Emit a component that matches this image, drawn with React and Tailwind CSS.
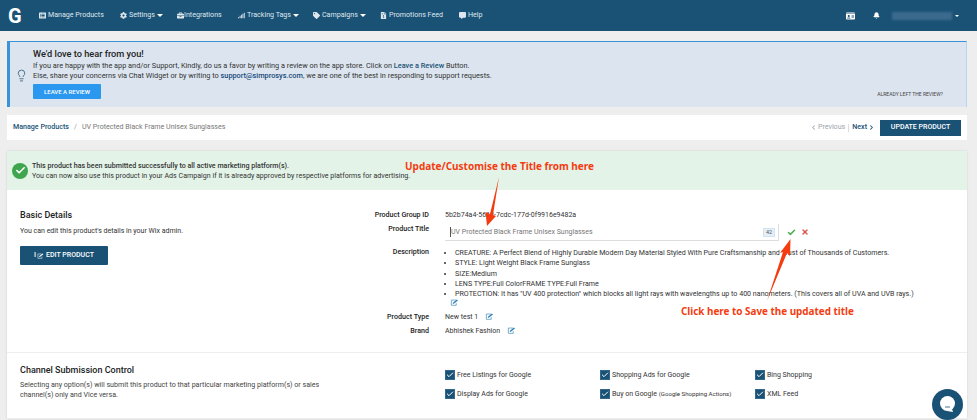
import { Bell, Check, ChevronLeft, ChevronRight, Lightbulb, X } from 'lucide-react'
import { FaBriefcase, FaCog, FaCommentAlt, FaFileInvoiceDollar, FaIdCard, FaListAlt, FaSignal, FaTag } from 'react-icons/fa'

const navItems = [
  { label: 'Manage Products', icon: FaListAlt, width: 'w-[81px]' },
  { label: 'Settings', icon: FaCog, caret: true, width: 'w-[57px]' },
  { label: 'Integrations', icon: FaBriefcase, width: 'w-[61px]', tight: true },
  { label: 'Tracking Tags', icon: FaSignal, caret: true, width: 'w-[75px]' },
  { label: 'Campaigns', icon: FaTag, caret: true, width: 'w-[67px]' },
  { label: 'Promotions Feed', icon: FaFileInvoiceDollar, width: 'w-[79px]' },
  { label: 'Help', icon: FaCommentAlt, width: 'w-[25px]' },
]

const bullets = [
  'CREATURE: A Perfect Blend of Highly Durable Modern Day Material Styled With Pure Craftsmanship and Trust of Thousands of Customers.',
  'STYLE: Light Weight Black Frame Sunglass',
  'SIZE:Medium',
  'LENS TYPE:Full ColorFRAME TYPE:Full Frame',
  'PROTECTION: It has "UV 400 protection" which blocks all light rays with wavelengths up to 400 nanometers. (This covers all of UVA and UVB rays.)',
]

function EditIcon({ className = '' }) {
  return (
    <svg viewBox="0 0 12 10" className={`h-[7px] w-[9px] text-[#2f7fb5] ${className}`} fill="none" stroke="currentColor">
      <path d="M8 1.5H1.5v7.5h7V6" strokeWidth="0.9" />
      <path d="M3.5 7l.6-2L9.5.8l1.4 1.4L5.5 6.4z" fill="currentColor" stroke="none" />
    </svg>
  )
}

function Caret() {
  return <span className="ml-[2px] h-0 w-0 border-x-[3px] border-t-[3px] border-x-transparent border-t-white" />
}

function Label({ children }) {
  return <span className="mr-[16px] w-[85px] shrink-0 text-right text-[7.1px] font-medium leading-[10px] text-[#222]">{children}</span>
}

function Channel({ children }) {
  return (
    <div className="flex w-[155px] items-center gap-[2px]">
      <span className="flex h-[10px] w-[10px] items-center justify-center border border-[#33688c] bg-[#1a5276]">
        <Check size={8} strokeWidth={3} className="text-white" />
      </span>
      <span className="text-[7px] leading-[10px] text-[#333]">{children}</span>
    </div>
  )
}

export default function App() {
  return (
    <div className="relative h-[420px] w-[977px] overflow-hidden bg-[#eeeeee] font-['Roboto',sans-serif] text-[#333]">
      {/* NAV */}
      <header className="flex h-[31px] items-center bg-[#1a5276] pl-[8px] text-white">
        <span className="w-[31px] text-[20px] font-bold leading-none">G</span>
        <nav className="flex items-center">
          {navItems.map((item) => (
            <div key={item.label} className={`flex items-center text-[7.1px] text-[#dfe7ee] ${item.width}`}>
              <item.icon className={`h-[7px] w-[7px] shrink-0 ${item.tight ? 'mr-0' : 'mr-[2px]'}`} />
              <span className="whitespace-nowrap">{item.label}</span>
              {item.caret && <Caret />}
            </div>
          ))}
        </nav>
        <div className="ml-auto flex items-center pr-[18px]">
          <FaIdCard className="h-[8px] w-[9px]" />
          <Bell size={7} fill="white" className="ml-[18px]" />
          <span className="ml-[12px] h-[8px] w-[60px] bg-[#3b6a8c] blur-[1px]" />
          <span className="ml-[3px] h-0 w-0 border-x-[2px] border-t-[2px] border-x-transparent border-t-white" />
        </div>
      </header>

      <main className="mx-[7px] w-[960px]">
        {/* REVIEW BANNER */}
        <section className="relative mt-[10px] flex h-[66px] border-l-[3px] border-r border-t border-[#3b93d9] border-r-[#b7d5ec] bg-[#dce5ef] pl-[5px]">
          <Lightbulb size={13} strokeWidth={1.4} className="mt-[27px] shrink-0 text-[#1f4d70]" />
          <div className="ml-[5px] pt-[6px]">
            <h2 className="text-[9.2px] font-medium leading-[12px] text-[#222]">We'd love to hear from you!</h2>
            <p className="mt-[1px] text-[7.33px] leading-[10px] text-[#333]">
              If you are happy with the app and/or Support, Kindly, do us a favor by writing a review on the app store. Click on{' '}
              <span className="font-medium text-[#1a5276]">Leave a Review</span> Button.
            </p>
            <p className="text-[7.33px] leading-[10px] text-[#333]">
              Else, share your concerns via Chat Widget or by writing to{' '}
              <span className="font-medium text-[#14497a]">support@simprosys.com</span>, we are one of the best in responding to support requests.
            </p>
            <button className="mt-[3px] flex h-[15px] w-[68px] items-center justify-center rounded-[1px] bg-[#2b98f0] text-[6px] font-medium text-white">
              LEAVE A REVIEW
            </button>
          </div>
          <span className="ml-auto mr-[23px] mt-[47px] text-[5px] leading-[10px] text-[#444]">ALREADY LEFT THE REVIEW?</span>
        </section>

        {/* BREADCRUMB */}
        <section className="mt-[8px] flex h-[25px] items-center bg-white px-[6px]">
          <span className="text-[7.1px] font-medium text-[#1a5276]">Manage Products</span>
          <span className="mx-[5px] text-[7.1px] text-[#999]">/</span>
          <span className="text-[7.1px] text-[#777]">UV Protected Black Frame Unisex Sunglasses</span>
          <div className="ml-auto flex items-center text-[7.1px]">
            <ChevronLeft size={7} strokeWidth={3.5} className="text-[#9ab]" />
            <span className="ml-[1px] text-[#9aa5ad]">Previous</span>
            <span className="mx-[3px] h-[8px] w-px bg-[#ddd]" />
            <span className="font-medium text-[#1a5276]">Next</span>
            <ChevronRight size={7} strokeWidth={3.5} className="ml-[1px] text-[#1a5276]" />
            <button className="ml-[5px] flex h-[16px] w-[81px] items-center justify-center bg-[#1a5276] text-[7px] font-medium text-white">
              UPDATE PRODUCT
            </button>
          </div>
        </section>

        {/* PRODUCT CARD */}
        <section className="mt-[11px] bg-white shadow-[0_0_2px_rgba(0,0,0,0.12)]">
          <div className="flex h-[39px] items-center bg-[#e4f3e8] pl-[5px]">
            <span className="flex h-[16px] w-[16px] items-center justify-center rounded-full bg-[#3fa64f]">
              <Check size={11} strokeWidth={3.5} className="text-white" />
            </span>
            <div className="ml-[4px] text-[7.1px] leading-[9.5px] text-[#333]">
              <p className="font-medium">This product has been submitted successfully to all active marketing platform(s).</p>
              <p>You can now also use this product in your Ads Campaign if it is already approved by respective platforms for advertising.</p>
            </div>
          </div>

          <div className="flex h-[163px] border-b border-[#eeeeee] pl-[13px] pt-[19px]">
            <div className="w-[324px] shrink-0">
              <h3 className="text-[9px] font-medium leading-[12px] text-[#222]">Basic Details</h3>
              <p className="mt-[5px] text-[7px] leading-[10px] text-[#333]">You can edit this product's details in your Wix admin.</p>
              <button className="mt-[10px] flex h-[19px] w-[88px] items-center justify-center rounded-[1px] bg-[#1a5276] text-[7px] font-medium text-white">
                <span className="mr-[1px]">I</span>
                <EditIcon className="mr-[2px] !h-[6px] !w-[7px] !text-white" />
                EDIT PRODUCT
              </button>
            </div>
            <div className="flex flex-col pt-[1px]">
              <div className="flex h-[14px]">
                <Label>Product Group ID</Label>
                <span className="text-[7px] leading-[10px] text-[#333]">5b2b74a4-5613-7cdc-177d-0f9916e9482a</span>
              </div>
              <div className="flex h-[23px]">
                <Label>Product Title</Label>
                <div className="flex h-[17px] w-[334px] items-center justify-between border-b border-r border-[#ddd] pl-[5px] pr-[3px]">
                  <span className="border-l border-[#555] text-[7px] text-[#777]">UV Protected Black Frame Unisex Sunglasses</span>
                  <span className="flex h-[9px] w-[12px] items-center justify-center border border-[#cfe3f3] bg-[#e4eff8] text-[5.5px] text-[#555]">42</span>
                </div>
                <Check size={9} strokeWidth={4} className="ml-[8px] mt-[4px] text-[#4cae4f]" />
                <X size={8} strokeWidth={4} className="ml-[5px] mt-[4px] text-[#d9534f]" />
              </div>
              <div className="flex">
                <Label>Description</Label>
                <div className="w-[500px]">
                  <ul className="mt-[1px] list-disc pl-[10px] text-[7.1px] leading-[10.3px] text-[#333]">
                    {bullets.map((b) => (
                      <li key={b} className="whitespace-nowrap">{b}</li>
                    ))}
                  </ul>
                  <EditIcon className="ml-[5px] block" />
                </div>
              </div>
              <div className="mt-[6px] flex h-[14px]">
                <Label>Product Type</Label>
                <span className="text-[7px] leading-[10px] text-[#333]">New test 1</span>
                <EditIcon className="ml-[7px] mt-[1px]" />
              </div>
              <div className="flex h-[14px]">
                <Label>Brand</Label>
                <span className="text-[7px] leading-[10px] text-[#333]">Abhishek Fashion</span>
                <EditIcon className="ml-[7px] mt-[1px]" />
              </div>
            </div>
          </div>

          <div className="flex h-[66px] border-b border-[#eeeeee] pl-[13px] pt-[11px]">
            <div className="w-[425px] shrink-0">
              <h3 className="text-[9px] font-medium leading-[12px] text-[#222]">Channel Submission Control</h3>
              <p className="mt-[4px] w-[325px] text-[7.1px] leading-[10px] text-[#444]">
                Selecting any option(s) will submit this product to that particular marketing platform(s) or sales channel(s) only and Vice versa.
              </p>
            </div>
            <div className="flex flex-col gap-[9px] pt-[6px]">
              <div className="flex">
                <Channel>Free Listings for Google</Channel>
                <Channel>Shopping Ads for Google</Channel>
                <Channel>Bing Shopping</Channel>
              </div>
              <div className="flex">
                <Channel>Display Ads for Google</Channel>
                <Channel>
                  Buy on Google <span className="text-[6.1px]">(Google Shopping Actions)</span>
                </Channel>
                <Channel>XML Feed</Channel>
              </div>
            </div>
          </div>
        </section>
      </main>

      {/* ANNOTATIONS */}
      <span className="absolute left-[405px] top-[160px] whitespace-nowrap font-['Noto_Sans',sans-serif] text-[10px] font-bold leading-[12px] text-[#f43c10]">
        Update/Customise the Title from here
      </span>
      <span className="absolute left-[681px] top-[305px] whitespace-nowrap font-['Noto_Sans',sans-serif] text-[9.9px] font-bold leading-[12px] text-[#f43c10]">
        Click here to Save the updated title
      </span>
      <svg className="absolute left-0 top-0" width="977" height="420" fill="#f43c10">
        <path d="M499 177 L490 214 L485.5 212 L487 226 L496 216 L493 215 Z" />
        <path d="M767 301 L783 252 L780 253 L790.5 239 L790 256 L787 253 Z" />
      </svg>

      {/* CHAT WIDGET */}
      <svg className="absolute left-[932px] top-[389px]" width="31" height="31" viewBox="0 0 31 31">
        <circle cx="15.5" cy="15.5" r="15.5" fill="#1a5276" />
        <circle cx="15.5" cy="14.5" r="7.5" fill="#fff" />
        <path d="M15 22l5-2 1 3z" fill="#fff" />
        <path d="M13 18h5" stroke="#1a5276" strokeWidth="0.8" />
      </svg>
    </div>
  )
}
